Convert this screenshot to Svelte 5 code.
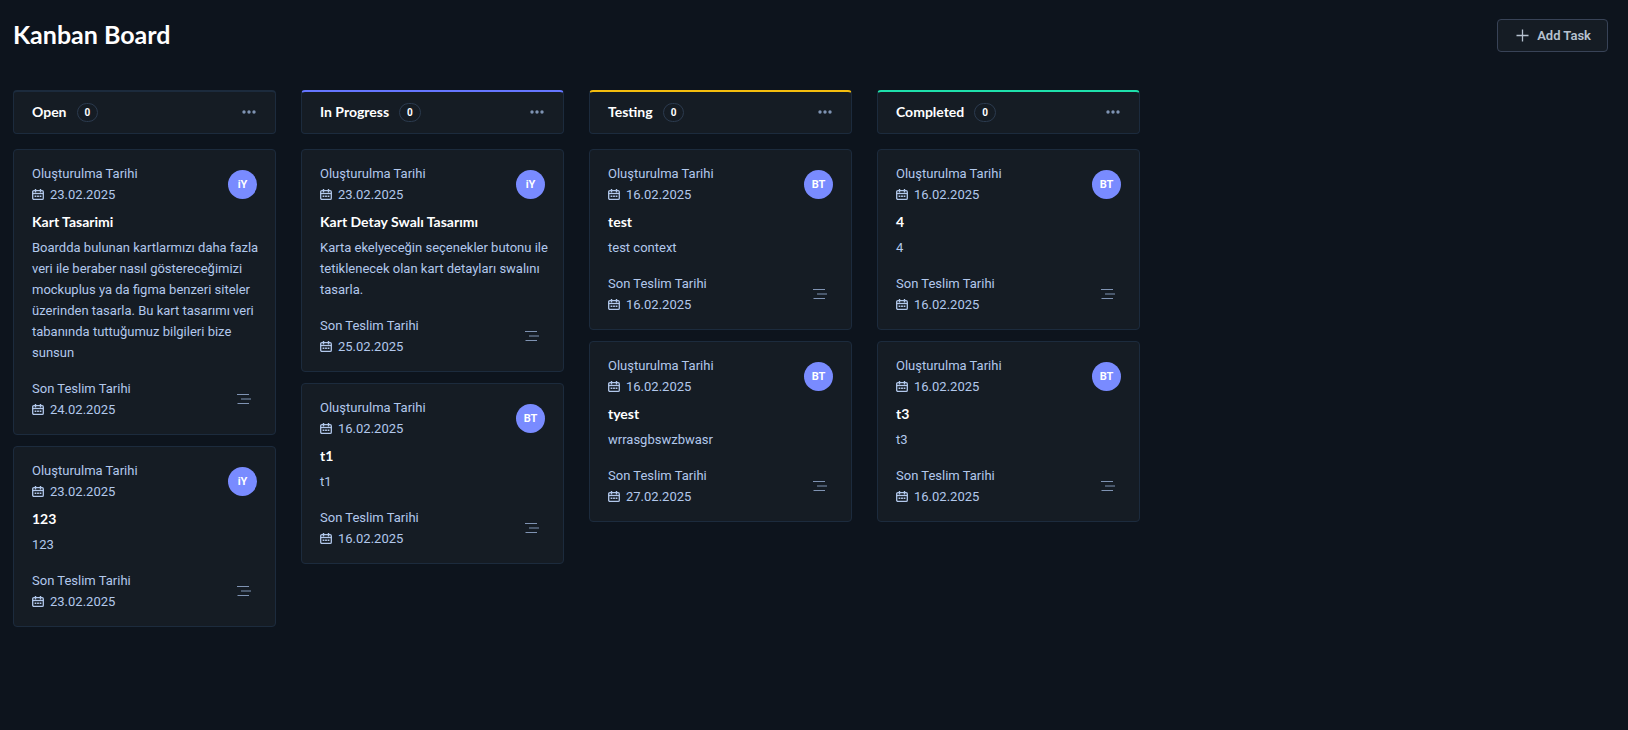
<script>
  const columns = [
    {
      title: 'Open',
      accent: '#1c2b3d',
      cards: [
        {
          created: '23.02.2025',
          initials: 'iY',
          title: 'Kart Tasarimi',
          text: 'Boardda bulunan kartlarmızı daha fazla veri ile beraber nasıl göstereceğimizi mockuplus ya da figma benzeri siteler üzerinden tasarla. Bu kart tasarımı veri tabanında tuttuğumuz bilgileri bize sunsun',
          due: '24.02.2025'
        },
        { created: '23.02.2025', initials: 'iY', title: '123', text: '123', due: '23.02.2025' }
      ]
    },
    {
      title: 'In Progress',
      accent: '#6576ff',
      cards: [
        {
          created: '23.02.2025',
          initials: 'iY',
          title: 'Kart Detay Swalı Tasarımı',
          text: 'Karta ekelyeceğin seçenekler butonu ile tetiklenecek olan kart detayları swalını tasarla.',
          due: '25.02.2025'
        },
        { created: '16.02.2025', initials: 'BT', title: 't1', text: 't1', due: '16.02.2025' }
      ]
    },
    {
      title: 'Testing',
      accent: '#f4bd0e',
      cards: [
        { created: '16.02.2025', initials: 'BT', title: 'test', text: 'test context', due: '16.02.2025' },
        { created: '16.02.2025', initials: 'BT', title: 'tyest', text: 'wrrasgbswzbwasr', due: '27.02.2025' }
      ]
    },
    {
      title: 'Completed',
      accent: '#1ee0ac',
      cards: [
        { created: '16.02.2025', initials: 'BT', title: '4', text: '4', due: '16.02.2025' },
        { created: '16.02.2025', initials: 'BT', title: 't3', text: 't3', due: '16.02.2025' }
      ]
    }
  ];
</script>

{#snippet date(label, value)}
  <div class="date">
    <span>{label}</span>
    <span class="day">
      <svg width="12" height="12" viewBox="0 0 12 12" fill="none" stroke="currentColor" aria-hidden="true">
        <rect x="0.7" y="1.7" width="10.6" height="8.7" rx="1.2" stroke-width="1.3" />
        <path d="M0.5 4.5H11.5" stroke-width="1.3" />
        <path d="M3.5 0V3.4M8.5 0V3.4" stroke-width="1.4" />
        <path d="M2.6 7.2H4.4M5.1 7.2H6.9M7.6 7.2H9.4" stroke-width="1.5" />
      </svg>
      {value}
    </span>
  </div>
{/snippet}

<main>
  <header class="top">
    <h1>Kanban Board</h1>
    <button class="add" type="button">
      <svg width="13" height="13" viewBox="0 0 13 13" fill="none" stroke="currentColor" stroke-width="1.3" aria-hidden="true">
        <path d="M6.5 0.5V12.5M0.5 6.5H12.5" />
      </svg>
      Add Task
    </button>
  </header>

  <div class="board">
    {#each columns as column}
      <section class="column">
        <div class="head" style="border-top-color: {column.accent}">
          <h2>{column.title}</h2>
          <span class="count">0</span>
          <button class="icon" type="button" aria-label="Column options">
            <svg width="14" height="4" viewBox="0 0 14 4" fill="currentColor" aria-hidden="true">
              <circle cx="2" cy="2" r="1.7" /><circle cx="7" cy="2" r="1.7" /><circle cx="12" cy="2" r="1.7" />
            </svg>
          </button>
        </div>
        {#each column.cards as card}
          <article class="card">
            <div class="row">
              {@render date('Oluşturulma Tarihi', card.created)}
              <span class="avatar">{card.initials}</span>
            </div>
            <h3>{card.title}</h3>
            <p>{card.text}</p>
            <div class="row">
              {@render date('Son Teslim Tarihi', card.due)}
              <button class="icon detail" type="button" aria-label="Task details">
                <svg width="14" height="11" viewBox="0 0 14 11" fill="none" stroke="currentColor" aria-hidden="true">
                  <path d="M0 0.5H12M4 5H14M0.5 9.5H12" />
                </svg>
              </button>
            </div>
          </article>
        {/each}
      </section>
    {/each}
  </div>
</main>

<style>
  :global(body) {
    background: #0d141d;
  }
  main {
    padding: 19px 20px 19px 13px;
    color: #b2c8ec;
    font: 400 13px/21px Roboto, sans-serif;
  }
  h1,
  h2,
  h3,
  p {
    margin: 0;
  }
  h1,
  h2,
  h3 {
    color: #fff;
    font-family: Lato, sans-serif;
    font-weight: 700;
  }
  h1 {
    font-size: 25px;
    line-height: 30px;
  }
  h2,
  h3 {
    font-size: 14px;
    line-height: 20px;
  }
  button {
    font: inherit;
    cursor: pointer;
  }
  .top {
    display: flex;
    justify-content: space-between;
    align-items: flex-start;
  }
  .add {
    display: flex;
    align-items: center;
    gap: 8px;
    padding: 5px 16px 5px 18px;
    border: 1px solid #384357;
    border-radius: 4px;
    background: #151c24;
    color: #b7c2d0;
    font-size: 13px;
    font-weight: 600;
    line-height: 21px;
  }
  .board {
    display: flex;
    align-items: flex-start;
    gap: 25px;
    margin-top: 38px;
  }
  .column {
    display: flex;
    flex: 0 0 263px;
    flex-direction: column;
    gap: 11px;
  }
  .head,
  .card {
    border: 1px solid #1c2b3d;
    border-radius: 4px;
    background: #151c24;
  }
  .head {
    display: flex;
    align-items: center;
    margin-bottom: 4px;
    padding: 10px 19px 11px 18px;
    border-top-width: 2px;
  }
  .count {
    margin-left: 10px;
    padding: 0 7px;
    border: 1px solid #2b3a4e;
    border-radius: 10px;
    color: #fff;
    font-size: 10px;
    font-weight: 700;
    line-height: 17px;
  }
  .icon {
    display: flex;
    margin-left: auto;
    padding: 0;
    border: 0;
    background: none;
    color: #7f93b3;
  }
  .card {
    padding: 13px 18px 14px;
  }
  .row {
    display: flex;
    align-items: center;
    justify-content: space-between;
  }
  .date {
    display: flex;
    flex-direction: column;
  }
  .day {
    display: flex;
    align-items: center;
    gap: 6px;
  }
  .avatar {
    width: 29px;
    height: 29px;
    border-radius: 50%;
    background: #798bff;
    color: #fff;
    font-size: 11px;
    font-weight: 700;
    line-height: 29px;
    text-align: center;
  }
  h3 {
    margin: 7px 0 5px;
  }
  p {
    margin: 0 -8px 15px 0;
  }
  .detail {
    margin-right: 6px;
  }
</style>
